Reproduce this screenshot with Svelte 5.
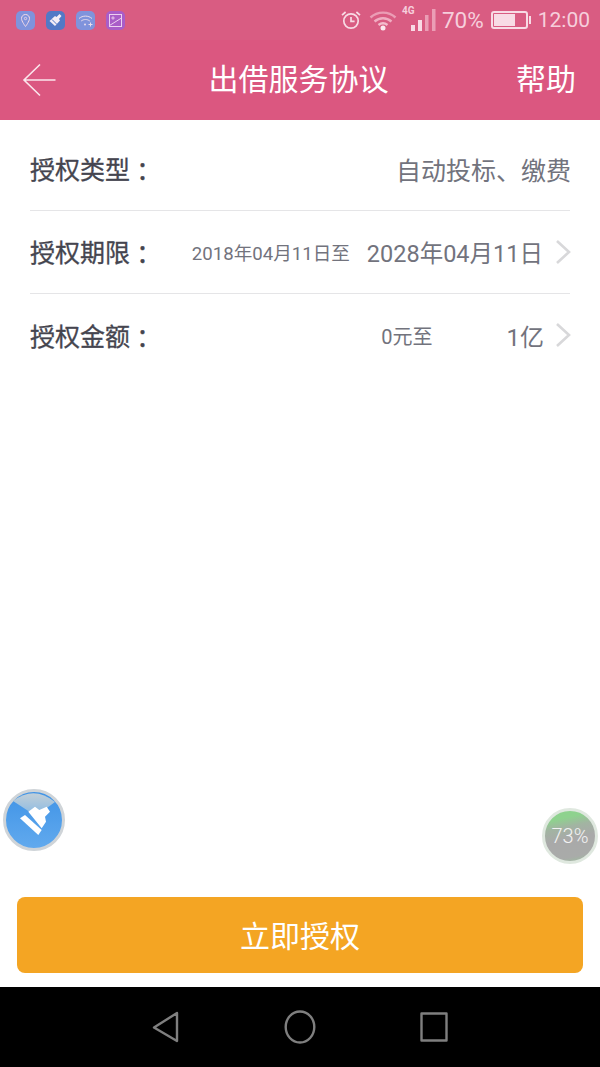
<script>
  const rows = [
    { label: '授权类型', right: '自动投标、缴费', kind: 'type' },
    { label: '授权期限', from: '2018年04月11日至', to: '2028年04月11日', kind: 'date' },
    { label: '授权金额', from: '0元至', to: '1亿', kind: 'amount' }
  ];
</script>

<div class="phone">
  <div class="status">
    <div class="apps">
      <span class="app loc">
        <svg viewBox="0 0 19 19" width="19" height="19"><path d="M9.500 3.500c-2.400 0-4 1.800-4 4C5.500 10.300 9.500 15.500 9.500 15.500s4-5.200 4-8c0-2.200-1.600-4-4-4z" fill="none" stroke="#f3dbe8" stroke-width="1"/><circle cx="9.500" cy="7.500" r="1.200" fill="none" stroke="#f3dbe8" stroke-width=".8"/></svg>
      </span>
      <span class="app brush">
        <svg viewBox="0 0 19 19" width="19" height="19"><path d="M3.500 10 9 5l1.500 1 3-3 2 2-2.500 3 1 1.500-5 5.500z" fill="#f4eef6"/><path d="M6 8.500l5 5" stroke="#5279c6" stroke-width="1"/></svg>
      </span>
      <span class="app wifi">
        <svg viewBox="0 0 19 19" width="19" height="19" fill="none" stroke="#e9dcec" stroke-width="1"><path d="M3 7.500c3.700-3.200 9.300-3.200 13 0"/><path d="M5.200 10c2.500-2 6.100-2 8.600 0"/><circle cx="9" cy="13.500" r="1" fill="#e9dcec" stroke="none"/><path d="M12.500 13.500h4M14.500 11.500v4"/></svg>
      </span>
      <span class="app pic">
        <svg viewBox="0 0 19 19" width="19" height="19" fill="none" stroke="#eed0f0" stroke-width="1"><rect x="3.500" y="3.500" width="12" height="12"/><circle cx="7" cy="7" r="1.100"/><path d="M3.500 14.500 15.500 7"/></svg>
      </span>
    </div>
    <div class="sys">
      <svg class="alarm" viewBox="0 0 22 22" width="22" height="22" fill="none" stroke="#f8dbe5" stroke-width="1.700"><circle cx="11" cy="12" r="7.200"/><path d="M11 8v4.300h3.600"/><path d="M2 6.200 5.600 3M20 6.200 16.400 3"/></svg>
      <svg class="wifi-icon" viewBox="0 0 28 22" width="28" height="22" fill="none" stroke="#eb9db5" stroke-width="2.400"><path d="M1.500 8.500c7-6.500 18-6.500 25 0"/><path d="M5.500 12.500c5-4.300 12-4.300 17 0" stroke="#f0adc2"/><path d="M9.500 16c3-2.300 6-2.300 9 0" stroke="#f3bccd"/><circle cx="14" cy="19" r="2.500" fill="#fbe9ef" stroke="none"/></svg>
      <span class="net">
        <span class="g4">4G</span>
        <svg viewBox="0 0 25 22" width="25" height="22"><rect x="0" y="16" width="4" height="6" fill="#f8dbe5"/><rect x="7" y="11" width="4" height="11" fill="#f8dbe5"/><rect x="14" y="6" width="3.500" height="16" fill="#eb9db5"/><rect x="21" y="0" width="3.500" height="22" fill="#eb9db5"/></svg>
      </span>
      <span class="stat-text pct">70%</span>
      <span class="battery"><span class="level"></span></span>
      <span class="stat-text clock">12:00</span>
    </div>
  </div>

  <header class="bar">
    <svg class="back" viewBox="0 0 36 34" width="36" height="34" fill="none" stroke="#fbe6ec" stroke-width="1.600"><path d="M33.500 17H2M18 1.500 2 17l16 15.500"/></svg>
    <h1>出借服务协议</h1>
    <span class="help">帮助</span>
  </header>

  <main class="content">
    {#each rows as row}
      <div class="row">
        <span class="label">{row.label}<span class="colon">：</span></span>
        {#if row.kind === 'type'}
          <span class="value">{row.right}</span>
        {:else}
          <span class="pair {row.kind}">
            <span class="from">{row.from}</span>
            <span class="to">{row.to}</span>
            <svg class="chev" viewBox="0 0 16 26" width="16" height="26" fill="none" stroke="#d8d8da" stroke-width="2.600"><path d="M2 2 14 13 2 24"/></svg>
          </span>
        {/if}
      </div>
    {/each}
  </main>

  <div class="float clean">
    <svg viewBox="0 0 62 62" width="62" height="62">
      <defs>
        <linearGradient id="cleanFill" x1="0" y1="0" x2="0" y2="1">
          <stop offset="0" stop-color="#3f93e6"/>
          <stop offset="1" stop-color="#62aaee"/>
        </linearGradient>
        <linearGradient id="wedge" x1="0" y1="0" x2="0" y2="1">
          <stop offset="0" stop-color="#c2cfd8"/>
          <stop offset="1" stop-color="#86b9e4"/>
        </linearGradient>
      </defs>
      <circle cx="31" cy="31" r="29.500" fill="url(#cleanFill)" stroke="#cfd4d8" stroke-width="3"/>
      <path d="M10 12Q31 -4 52 13L33 27z" fill="url(#wedge)"/>
      <path d="M25.300 22.700 32 17.700l4.300 3.300 7.400-3.300 3.300 5-5 5 1 5-4.300 6.600z" fill="#fff"/>
      <path d="M17 29.300 22 26 38.700 41l-3.400 5z" fill="#fff"/>
    </svg>
  </div>

  <div class="float meter">
    <span>73%</span>
  </div>

  <div class="action">
    <button>立即授权</button>
  </div>

  <nav class="softkeys">
    <svg viewBox="0 0 28 32" width="28" height="32" fill="none" stroke="#7f7f7f" stroke-width="2.400" stroke-linejoin="round"><path d="M25 2 2 16.500 25 30z"/></svg>
    <svg viewBox="0 0 32 34" width="32" height="34" fill="none" stroke="#7f7f7f" stroke-width="2.400"><ellipse cx="16" cy="17" rx="14.300" ry="15.500"/></svg>
    <svg viewBox="0 0 28 30" width="28" height="30" fill="none" stroke="#7f7f7f" stroke-width="2.400" stroke-linejoin="round"><rect x="1.500" y="1.500" width="25" height="27"/></svg>
  </nav>
</div>

<style>
  :global(body) {
    margin: 0;
    background: #fff;
  }

  .phone {
    position: relative;
    width: 600px;
    height: 1067px;
    display: flex;
    flex-direction: column;
    overflow: hidden;
    background: #fff;
    font-family: "Roboto", "Noto Sans CJK SC", sans-serif;
  }

  .status {
    height: 40px;
    flex: none;
    display: flex;
    align-items: center;
    justify-content: space-between;
    padding: 0 10px 0 16px;
    background: #d95c82;
  }

  .apps {
    display: flex;
    gap: 11px;
  }

  .app {
    width: 19px;
    height: 19px;
    display: block;
    border-radius: 5px;
  }

  .app svg {
    display: block;
  }

  .loc { background: #7f93dc; }
  .brush { background: #5279c6; }
  .wifi { background: #7f93dc; }
  .pic { background: #a95dc8; }

  .sys {
    display: flex;
    align-items: center;
    color: #f6cfdc;
  }

  .alarm { margin-right: 7px; }
  .wifi-icon { margin-right: 14px; }

  .net {
    position: relative;
    width: 25px;
    height: 22px;
    margin-right: 6px;
  }

  .net svg { display: block; }

  .g4 {
    position: absolute;
    left: -9px;
    top: -3px;
    font-size: 10px;
    font-weight: 700;
    line-height: 10px;
  }

  .stat-text {
    font-size: 21px;
    line-height: 24px;
  }

  .pct {
    font-size: 22.500px;
    margin-right: 7px;
  }

  .battery {
    position: relative;
    width: 31px;
    height: 12px;
    border: 2px solid #f8dbe5;
    border-radius: 3px;
    padding: 1px;
    margin-right: 10px;
  }

  .battery::after {
    content: '';
    position: absolute;
    right: -5px;
    top: 3px;
    width: 2px;
    height: 8px;
    background: #f8dbe5;
  }

  .level {
    display: block;
    width: 70%;
    height: 100%;
    background: #f8dbe5;
  }

  .bar {
    height: 80px;
    flex: none;
    display: grid;
    grid-template-columns: 1fr auto 1fr;
    align-items: center;
    padding: 0 24px 0 22px;
    background: #db5780;
    color: #fff;
  }

  .bar h1 {
    margin: 0 0 0 -1px;
    font-size: 30px;
    font-weight: 400;
    line-height: 40px;
  }

  .help {
    justify-self: end;
    font-size: 30px;
    line-height: 40px;
  }

  .back { display: block; }

  .content {
    flex: 1;
    padding: 0 30px;
  }

  .row {
    display: flex;
    align-items: center;
    justify-content: space-between;
    height: 83px;
    padding-bottom: 4px;
    border-bottom: 1px solid #e5e5e7;
    box-sizing: border-box;
  }

  .row:first-child {
    height: 91px;
    padding-top: 4px;
    padding-bottom: 0;
  }

  .row:last-child {
    border-bottom: none;
  }

  .label {
    font-size: 25px;
    color: #45454f;
    -webkit-text-stroke: 0.3px #45454f;
    margin-top: 2px;
  }

  .colon {
    display: inline-block;
    font-family: "Noto Sans CJK TC", sans-serif;
    transform: translateY(2px);
  }

  .value {
    font-size: 25px;
    color: #72737d;
    margin: 3px -1px 0 0;
  }

  .pair {
    display: flex;
    align-items: center;
    color: #72737d;
    margin-top: 3px;
  }

  .from {
    font-size: 18.600px;
  }

  .to {
    font-size: 23.500px;
    margin-right: 12px;
  }

  .date .to { margin-left: 17px; }

  .amount .from { font-size: 20px; }
  .amount .to {
    font-size: 24px;
    margin-left: 74px;
    margin-right: 11px;
  }

  .chev {
    display: block;
    margin: 0 -1px 0 0;
  }

  .float {
    position: absolute;
    border-radius: 50%;
  }

  .clean {
    left: 3px;
    top: 789px;
    width: 62px;
    height: 62px;
  }

  .clean svg { display: block; }

  .meter {
    left: 542px;
    top: 808px;
    width: 50px;
    height: 50px;
    border: 3px solid #dfe8df;
    background: linear-gradient(168deg, #8ed28e 0 18%, #a2b4a2 34%, #a9a9a9 55%, #a9aba9 85%, #9cc09c 100%);
    display: flex;
    align-items: center;
    justify-content: center;
    color: #f2f2f2;
    font-size: 20px;
    font-weight: 300;
  }

  .action {
    flex: none;
    padding: 0 17px 14px;
  }

  .action button {
    display: block;
    width: 100%;
    height: 76px;
    padding: 0 0 2px;
    border: none;
    border-radius: 8px;
    background: #f4a523;
    color: #fff;
    font-family: inherit;
    font-size: 30px;
  }

  .softkeys {
    height: 80px;
    flex: none;
    display: flex;
    align-items: center;
    justify-content: center;
    gap: 104px;
    background: #000;
  }
</style>
